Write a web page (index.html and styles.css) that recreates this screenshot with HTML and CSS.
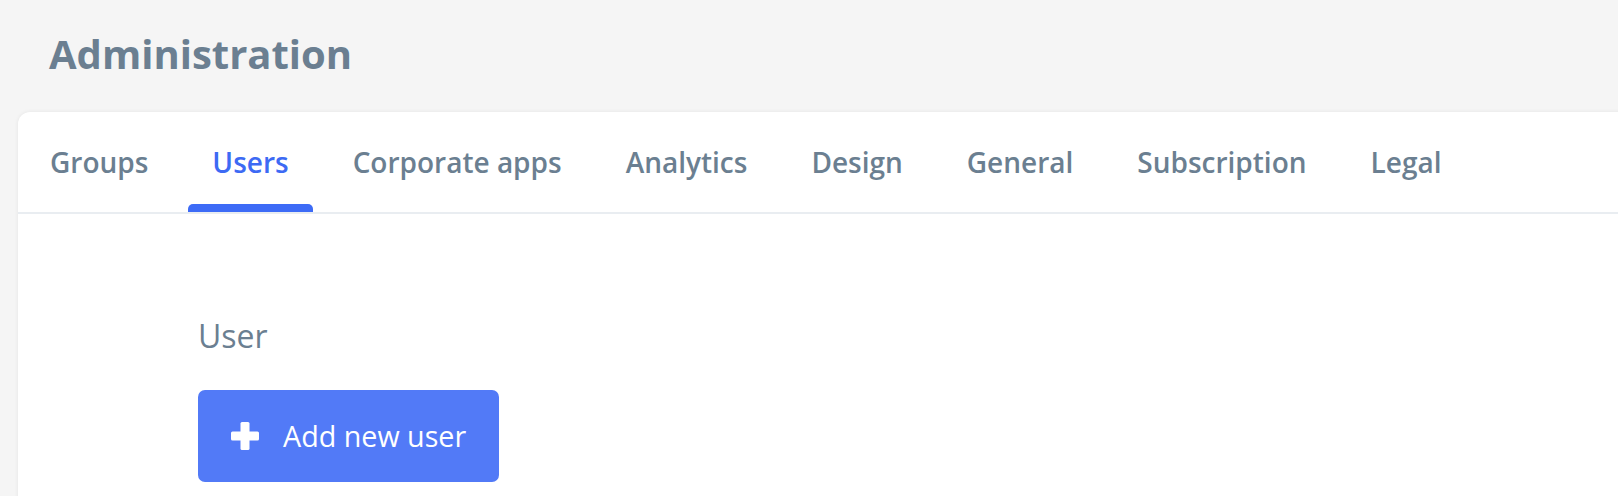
FILE: index.html
```html
<!DOCTYPE html>
<html lang="en">
<head>
<meta charset="utf-8">
<title>Administration</title>
<link rel="stylesheet" href="styles.css">
</head>
<body>
<header class="page-header">
  <h1 class="page-title">Administration</h1>
</header>
<main class="card">
  <nav class="tabs">
    <a class="tab">Groups</a>
    <a class="tab tab-active">Users</a>
    <a class="tab">Corporate apps</a>
    <a class="tab">Analytics</a>
    <a class="tab">Design</a>
    <a class="tab">General</a>
    <a class="tab">Subscription</a>
    <a class="tab">Legal</a>
  </nav>
  <section class="content">
    <h2 class="section-title">User</h2>
    <button class="btn-primary" type="button">
      <svg class="btn-icon" width="28" height="28" viewBox="0 0 28 28" aria-hidden="true">
        <rect x="9.5" y="0" width="9" height="28" rx="1.5" fill="#fff"/>
        <rect x="0" y="9.5" width="28" height="9" rx="1.5" fill="#fff"/>
      </svg>
      <span>Add new user</span>
    </button>
  </section>
</main>
</body>
</html>
```
FILE: styles.css
```css
html, body {
  margin: 0;
  padding: 0;
}
body {
  background: #f5f5f5;
  font-family: "Open Sans", "Noto Sans", sans-serif;
  color: #6b7f91;
  overflow: hidden;
  height: 496px;
}
.page-header {
  padding: 28px 0 0 49px;
  height: 112px;
  box-sizing: border-box;
}
.page-title {
  margin: 0;
  font-size: 40px;
  line-height: 52px;
  font-weight: 700;
  color: #6b7f91;
}
.card {
  margin: 0 -24px 0 18px;
  background: #fff;
  border-radius: 12px 12px 0 0;
  box-shadow: 0 0 4px rgba(0, 0, 0, 0.07);
  min-height: 600px;
}
.tabs {
  display: flex;
  gap: 16px;
  padding: 0 0 0 8px;
  border-bottom: 2px solid #e9edf1;
}
.tab {
  position: relative;
  padding: 30px 24px;
  font-size: 28px;
  line-height: 40px;
  font-weight: 600;
  color: #6b7f91;
  cursor: pointer;
}
.tab-active {
  color: #3d6af4;
}
.tab-active::after {
  content: "";
  position: absolute;
  left: 0;
  right: 0;
  bottom: 0;
  height: 8px;
  background: #3d6bf6;
  border-radius: 5px 5px 0 0;
}
.content {
  padding: 100px 0 0 180px;
}
.section-title {
  margin: 0 0 32px;
  font-size: 32px;
  line-height: 44px;
  font-weight: 400;
  color: #6b7f91;
}
.btn-primary {
  display: inline-flex;
  align-items: center;
  gap: 24px;
  padding: 26px 33px 26px 33px;
  border: none;
  border-radius: 7px;
  background: #527af7;
  color: #fff;
  font-family: inherit;
  font-size: 28.7px;
  line-height: 40px;
  font-weight: 400;
  cursor: pointer;
}
.btn-icon {
  display: block;
}
```
